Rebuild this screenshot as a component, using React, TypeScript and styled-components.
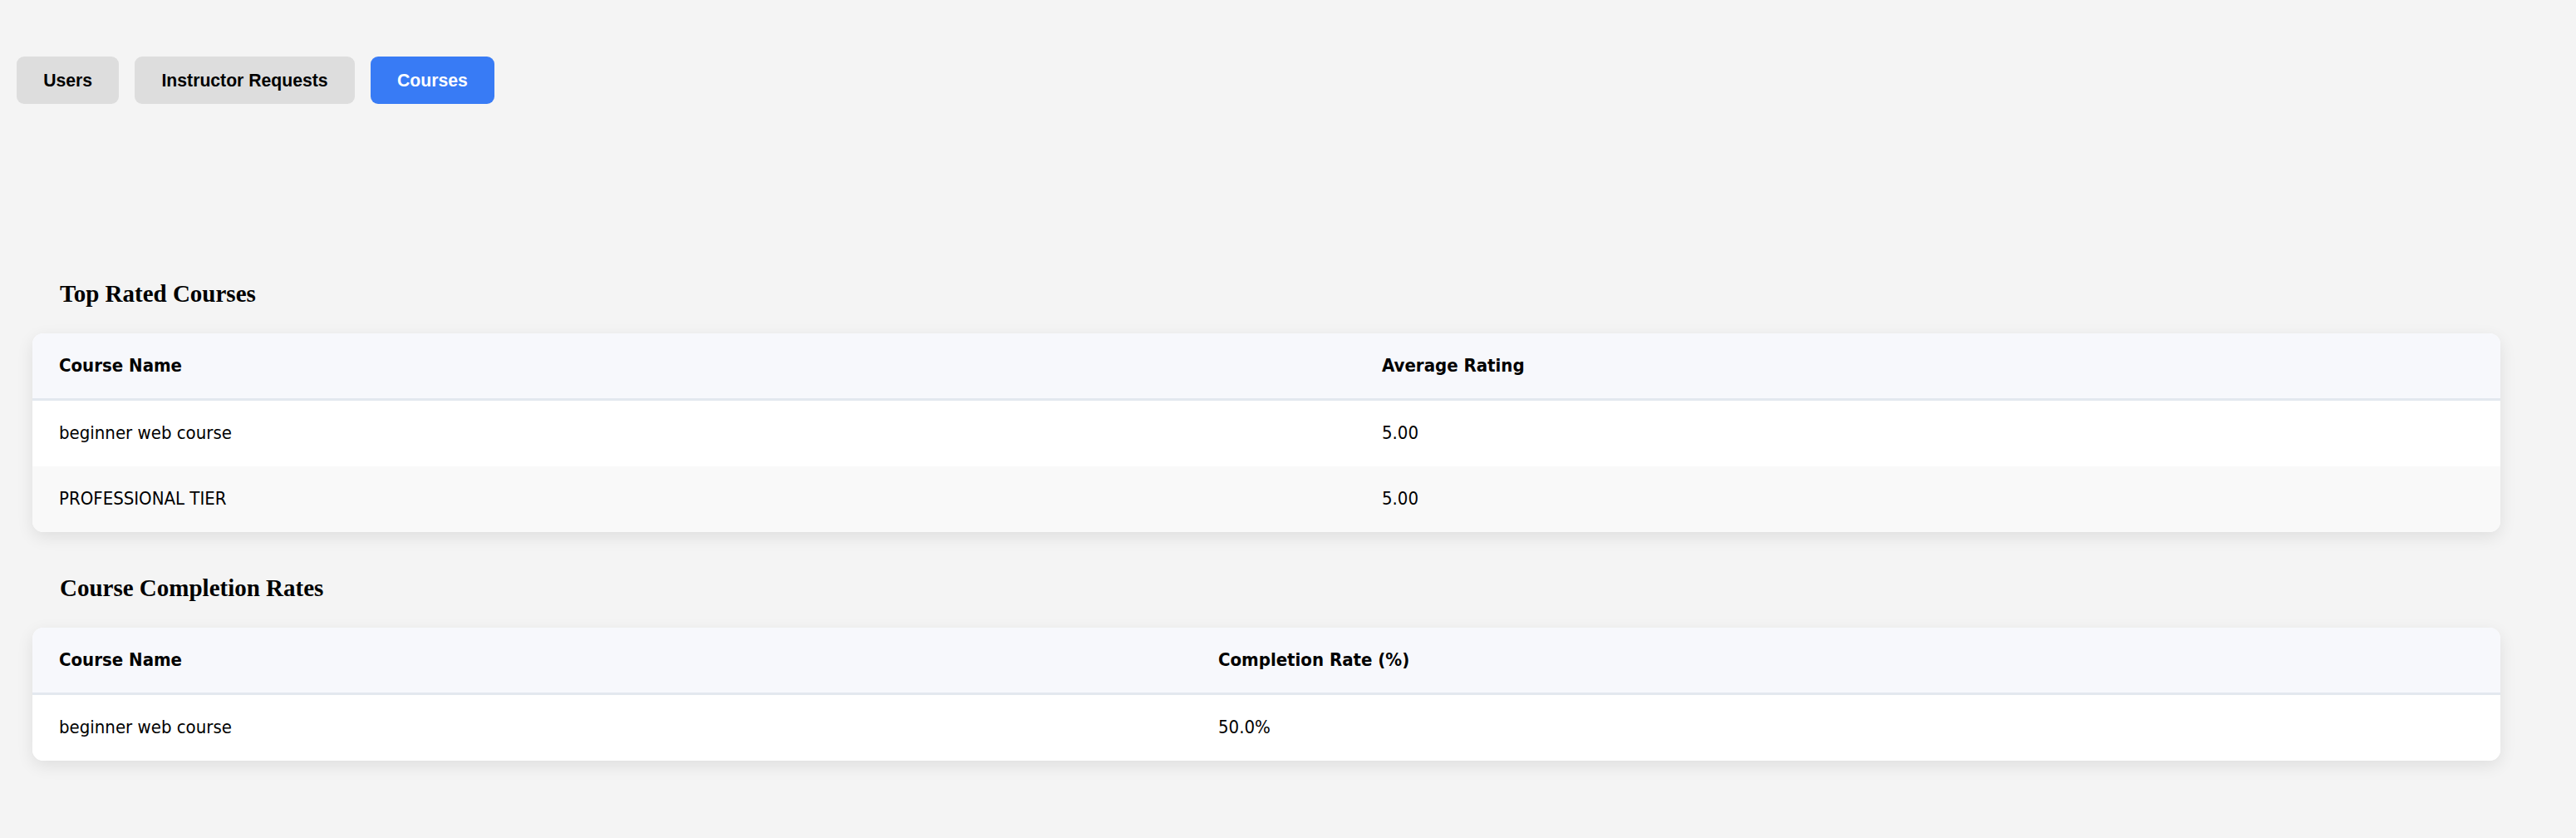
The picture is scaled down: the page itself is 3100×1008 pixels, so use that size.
import React from "react";
import styled, { createGlobalStyle } from "styled-components";

const GlobalStyle = createGlobalStyle`
  html, body {
    margin: 0;
    padding: 0;
    background: #f4f4f4;
  }
  body {
    font-family: "DejaVu Sans Condensed", "DejaVu Sans", sans-serif;
    color: #000;
  }
`;

const Page = styled.div`
  display: flex;
  flex-direction: column;
  min-height: 1008px;
  background: #f4f4f4;
`;

const Nav = styled.nav`
  display: flex;
  gap: 19px;
  padding: 68px 0 0 20px;
`;

const TabButton = styled.button<{ $active?: boolean }>`
  font-family: "Liberation Sans", Arial, sans-serif;
  font-weight: 700;
  font-size: 21.2px;
  line-height: 25px;
  padding: 16px 32.2px;
  border: none;
  border-radius: 9px;
  background: ${(p) => (p.$active ? "#387bf5" : "#dddddd")};
  color: ${(p) => (p.$active ? "#ffffff" : "#000000")};
  cursor: pointer;
`;

const Content = styled.main`
  display: flex;
  flex-direction: column;
  gap: 50px;
  margin-top: 211px;
  padding-left: 39px;
`;

const Section = styled.section`
  display: flex;
  flex-direction: column;
  width: 2970px;
`;

const Heading = styled.h3`
  margin: 0 0 31px 0;
  padding-left: 33px;
  font-family: "Liberation Serif", "Times New Roman", serif;
  font-weight: 700;
  font-size: 29px;
  line-height: 34px;
`;

const Card = styled.div`
  background: #ffffff;
  border-radius: 13px;
  overflow: hidden;
  box-shadow: 0 6px 20px rgba(0, 0, 0, 0.09);
`;

const Table = styled.table`
  width: 100%;
  border-collapse: collapse;
  table-layout: fixed;
  font-family: "DejaVu Sans Condensed", "DejaVu Sans", sans-serif;
  font-size: 22px;
  line-height: 26px;
`;

const Col = styled.col<{ $width?: string }>`
  width: ${(p) => p.$width ?? "auto"};
`;

const HeadCell = styled.th`
  text-align: left;
  font-weight: 700;
  padding: 26px 32px;
  background: #f7f8fc;
  border-bottom: 3px solid #e3e8ef;
`;

const Row = styled.tr<{ $striped?: boolean }>`
  background: ${(p) => (p.$striped ? "#f9f9f9" : "#ffffff")};
`;

const Cell = styled.td`
  padding: 26px 32px 27px;
  font-weight: 400;
`;

type DataTableProps = {
  title: string;
  firstWidth: string;
  columns: [string, string];
  rows: [string, string][];
};

function DataTable({ title, firstWidth, columns, rows }: DataTableProps) {
  return (
    <Section>
      <Heading>{title}</Heading>
      <Card>
        <Table>
          <colgroup>
            <Col $width={firstWidth} />
            <Col />
          </colgroup>
          <thead>
            <tr>
              <HeadCell>{columns[0]}</HeadCell>
              <HeadCell>{columns[1]}</HeadCell>
            </tr>
          </thead>
          <tbody>
            {rows.map((r, i) => (
              <Row key={i} $striped={i % 2 === 1}>
                <Cell>{r[0]}</Cell>
                <Cell>{r[1]}</Cell>
              </Row>
            ))}
          </tbody>
        </Table>
      </Card>
    </Section>
  );
}

export default function App() {
  return (
    <Page>
      <GlobalStyle />
      <Nav>
        <TabButton>Users</TabButton>
        <TabButton>Instructor Requests</TabButton>
        <TabButton $active>Courses</TabButton>
      </Nav>
      <Content>
        <DataTable
          title="Top Rated Courses"
          firstWidth="1592px"
          columns={["Course Name", "Average Rating"]}
          rows={[
            ["beginner web course", "5.00"],
            ["PROFESSIONAL TIER", "5.00"],
          ]}
        />
        <DataTable
          title="Course Completion Rates"
          firstWidth="1395px"
          columns={["Course Name", "Completion Rate (%)"]}
          rows={[["beginner web course", "50.0%"]]}
        />
      </Content>
    </Page>
  );
}
